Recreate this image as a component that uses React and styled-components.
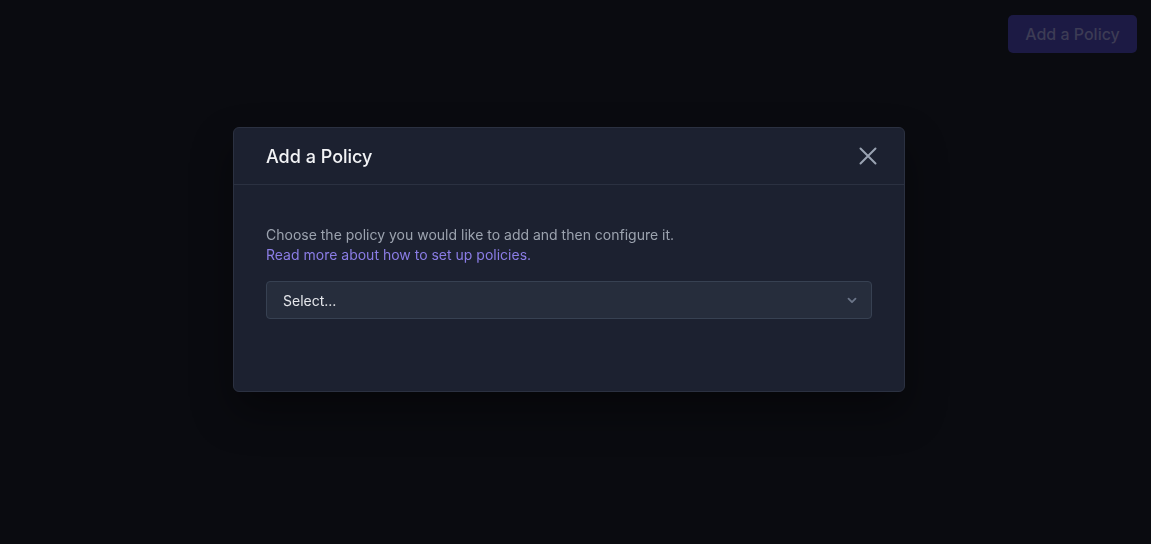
import styled, { createGlobalStyle } from "styled-components";

const GlobalStyle = createGlobalStyle`
  html, body {
    margin: 0;
    height: 100%;
    background: #0a0b10;
    font-family: Inter, "Noto Sans", sans-serif;
  }
  #root { height: 100%; }
`;

const Page = styled.div`
  min-height: 100vh;
  background: #0a0b10;
`;

const TopBar = styled.div`
  display: flex;
  justify-content: flex-end;
  padding: 15px 14px 0 0;
`;

const PrimaryButton = styled.button`
  height: 38px;
  width: 129px;
  border: none;
  border-radius: 5px;
  background: #1c1a44;
  color: #3d3c55;
  font-family: inherit;
  font-size: 16px;
  font-weight: 500;
  cursor: pointer;
`;

const Overlay = styled.div`
  position: fixed;
  inset: 0;
  display: flex;
  justify-content: center;
  align-items: flex-start;
  padding: 127px 13px 0 0;
`;

const Dialog = styled.div`
  width: 672px;
  box-sizing: border-box;
  background: #1c2130;
  border: 1px solid #2b3141;
  border-radius: 6px;
  box-shadow: 0 20px 40px rgba(0, 0, 0, 0.4);
`;

const Header = styled.div`
  display: flex;
  align-items: center;
  justify-content: space-between;
  height: 56px;
  padding: 0 24px 0 32px;
  border-bottom: 1px solid #2b3141;
`;

const Title = styled.h2`
  margin: 0;
  font-size: 18px;
  font-weight: 500;
  color: #f3f4f6;
`;

const CloseButton = styled.button`
  display: flex;
  padding: 0;
  border: none;
  background: none;
  color: #9aa3b2;
  cursor: pointer;
`;

const Body = styled.div`
  padding: 40px 32px 72px;
`;

const Text = styled.p`
  margin: 0;
  font-size: 14px;
  line-height: 20px;
  color: #9ca3af;
`;

const DocLink = styled.a`
  display: block;
  font-size: 14px;
  line-height: 20px;
  color: #8b7de6;
  text-decoration: none;
`;

const SelectBox = styled.div`
  margin-top: 16px;
  height: 38px;
  box-sizing: border-box;
  display: flex;
  align-items: center;
  justify-content: space-between;
  padding: 0 12px 0 16px;
  background: #262d3c;
  border: 1px solid #374152;
  border-radius: 4px;
  color: #e5e7eb;
  font-size: 14px;
`;

const Chevron = styled.svg`
  color: #6b7588;
`;

export default function App() {
  return (
    <Page>
      <GlobalStyle />
      <TopBar>
        <PrimaryButton>Add a Policy</PrimaryButton>
      </TopBar>
      <Overlay>
        <Dialog>
          <Header>
            <Title>Add a Policy</Title>
            <CloseButton aria-label="Close">
              <svg width="24" height="24" viewBox="0 0 24 24" fill="none" stroke="currentColor" strokeWidth="2" strokeLinecap="round">
                <path d="M4.5 4.5l15 15M19.5 4.5l-15 15" />
              </svg>
            </CloseButton>
          </Header>
          <Body>
            <Text>Choose the policy you would like to add and then configure it.</Text>
            <DocLink href="#">Read more about how to set up policies.</DocLink>
            <SelectBox>
              <span>Select...</span>
              <Chevron width="14" height="14" viewBox="0 0 20 20" fill="none" stroke="currentColor" strokeWidth="2.6" strokeLinecap="round" strokeLinejoin="round">
                <path d="M5 8l5 5 5-5" />
              </Chevron>
            </SelectBox>
          </Body>
        </Dialog>
      </Overlay>
    </Page>
  );
}
